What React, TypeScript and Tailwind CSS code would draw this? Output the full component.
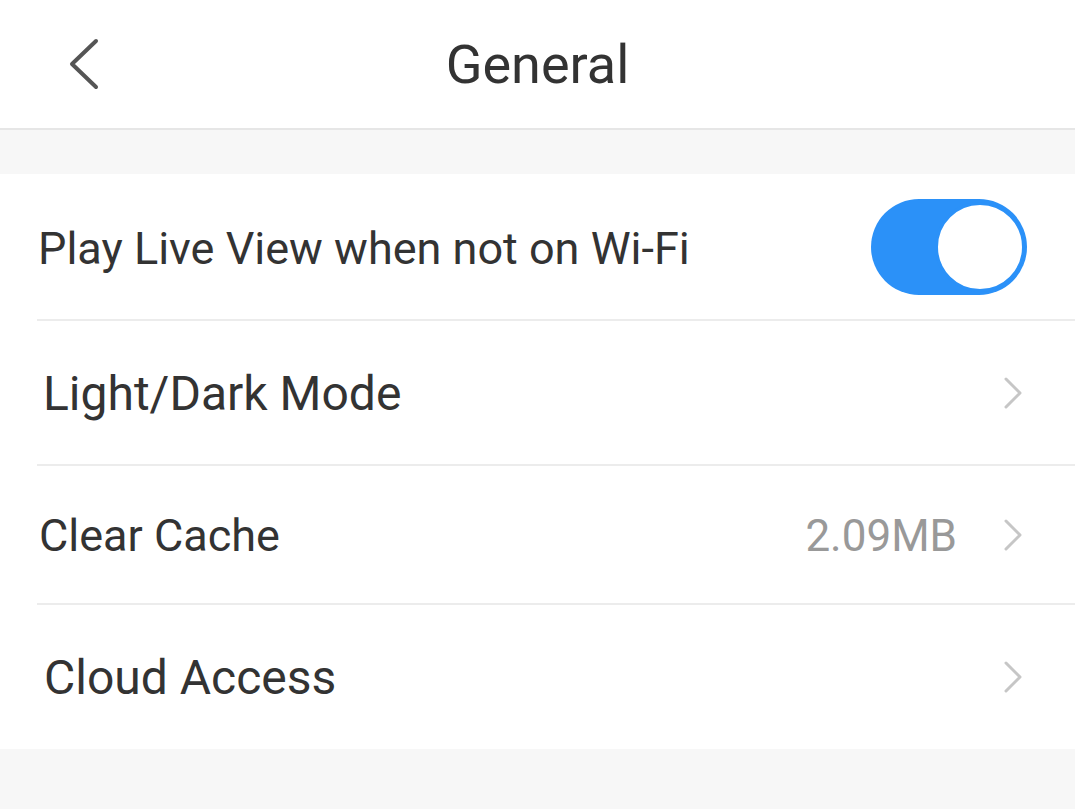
import React from "react";

function Chevron({ className = "" }: { className?: string }) {
  return (
    <svg viewBox="0 0 20 32" className={className} fill="none">
      <path d="M3 2 L17 16 L3 30" stroke="currentColor" strokeWidth="3" strokeLinecap="round" strokeLinejoin="round" />
    </svg>
  );
}

function Toggle() {
  return (
    <div className="flex h-[96px] w-[156px] items-center justify-end rounded-full bg-[#2b91f8] p-[2px]">
      <div className="size-[90px] rounded-full border-[3px] border-[#2b91f8] bg-white" />
    </div>
  );
}

export default function App() {
  return (
    <div className="flex h-[809px] w-[1075px] flex-col bg-[#f7f7f7] font-['Roboto',sans-serif] text-[#333333]">
      <header className="relative flex h-[130px] items-center justify-center border-b-2 border-[#e6e6e6] bg-white">
        <svg viewBox="0 0 32 52" className="absolute left-[68px] top-[38px] h-[52px] w-[32px] text-[#555555]" fill="none">
          <path d="M28 3 L4 26 L28 49" stroke="currentColor" strokeWidth="4" strokeLinecap="round" strokeLinejoin="round" />
        </svg>
        <h1 className="pt-[2px] text-[54px] leading-none">General</h1>
      </header>

      <div className="mt-[44px] flex flex-col bg-white">
        <div className="ml-[37px] flex h-[147px] items-center justify-between border-b-2 border-[#ececec] pr-[48px]">
          <span className="pl-[1px] pt-[4px] text-[45px]">Play Live View when not on Wi-Fi</span>
          <Toggle />
        </div>
        <div className="ml-[37px] flex h-[145px] items-center justify-between border-b-2 border-[#ececec] pr-[52px]">
          <span className="pl-[6px] pt-[2px] text-[48px]">Light/Dark Mode</span>
          <Chevron className="h-[32px] w-[20px] text-[#c6c6c6]" />
        </div>
        <div className="ml-[37px] flex h-[139px] items-center justify-between border-b-2 border-[#ececec] pr-[52px]">
          <span className="pl-[2px] pt-[2px] text-[45px]">Clear Cache</span>
          <div className="flex items-center gap-[46px]">
            <span className="pt-[2px] text-[44px] text-[#999999]">2.09MB</span>
            <Chevron className="h-[32px] w-[20px] text-[#c6c6c6]" />
          </div>
        </div>
        <div className="ml-[37px] flex h-[144px] items-center justify-between pr-[52px]">
          <span className="pl-[7px] pt-[2px] text-[48px]">Cloud Access</span>
          <Chevron className="h-[32px] w-[20px] text-[#c6c6c6]" />
        </div>
      </div>
    </div>
  );
}
